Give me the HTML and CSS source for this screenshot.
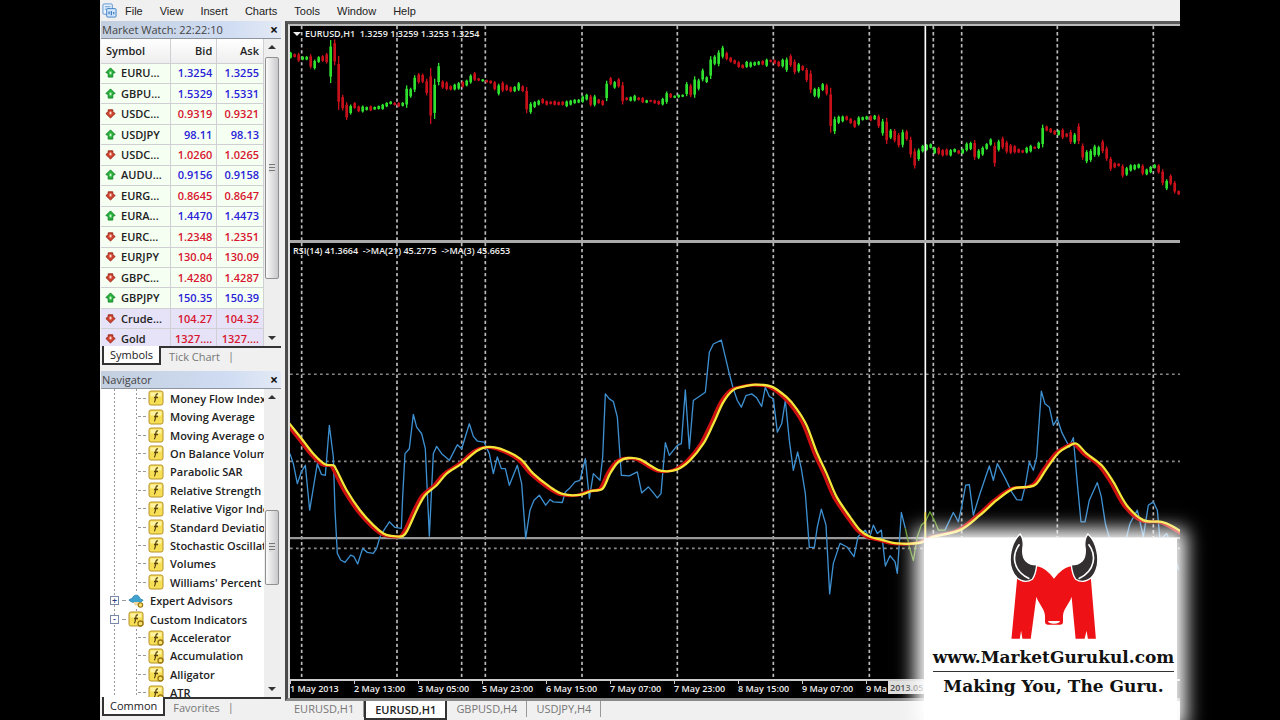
FILE: index.html
```html
<!DOCTYPE html>
<html lang="en">
<head>
    <meta charset="UTF-8">
    <meta name="viewport" content="width=device-width, initial-scale=1.0">
    <title>EURUSD,H1</title>
    <link rel="stylesheet" href="styles.css">
</head>
<body>

<!-- shared icons -->
<svg class="defs" width="0" height="0">
    <symbol id="up" viewBox="0 0 12 12">
        <path d="M6 1l5 5-2.500 1v4h-5V7L1 6z" fill="#27b03a" stroke="#15852a"/>
        <path d="M5 5h2v3H5z" fill="#d8ffd8"/>
    </symbol>
    <symbol id="down" viewBox="0 0 12 12">
        <path d="M6 11L1 6l2.500-2V2h5v2L11 6z" fill="#d0432f" stroke="#962315"/>
        <path d="M5 4h2v3H5z" fill="#ffe0d8"/>
    </symbol>
    <symbol id="func" viewBox="0 0 16 16">
        <rect x="1" y="1" width="14" height="14" rx="2" fill="#f7df55" stroke="#b8932a"/>
        <path d="M2.500 2.500h11v4h-11z" fill="#fdf3a0"/>
        <path d="M10 4c-2-.5-2 1-2.400 4S7 12 6 12M6 7.500h4" fill="none" stroke="#5a4510" stroke-width="1.300"/>
    </symbol>
    <symbol id="custom" viewBox="0 0 16 16">
        <use href="#func" width="16" height="16"/>
        <circle cx="12.500" cy="12.500" r="2.500" fill="#f7e36a" stroke="#9a7512" stroke-width="1.300"/>
    </symbol>
    <symbol id="expert" viewBox="0 0 18 16">
        <path d="M1 7c1-1 3-1.500 4-2 1-4 6-5 8-1l1 2 3 1c-2 3-5 3-8 3S3 9 1 7z" fill="#3fa3cf" stroke="#2a7ea8"/>
        <path d="M6 9h7l-1 4H8z" fill="#f3d79a"/>
        <circle cx="14" cy="12.500" r="2.500" fill="#f7e36a" stroke="#9a7512" stroke-width="1.300"/>
    </symbol>
</svg>

<div class="app">
    <nav class="menubar">
        <svg class="app-icon" viewBox="0 0 16 16">
            <rect x="1" y="1" width="10" height="11" rx="1" fill="#e9f3fd" stroke="#5b93cf"/>
            <path d="M3 4h6M3 6.500h6" stroke="#5b93cf"/>
            <rect x="5" y="6" width="10" height="9" rx="1" fill="#d4e7fa" stroke="#3f7fc4"/>
            <path d="M7.500 12V9M10 13V8.500M12.500 12V9.500" stroke="#3f7fc4" stroke-width="1.400"/>
        </svg>
        <button>File</button>
        <button>View</button>
        <button>Insert</button>
        <button>Charts</button>
        <button>Tools</button>
        <button>Window</button>
        <button>Help</button>
    </nav>

    <div class="workspace">
        <aside class="sidebar">
            <section class="panel market">
                <header class="panel-title">
                    <span>Market Watch: 22:22:10</span>
                    <button class="close" aria-label="Close Market Watch">×</button>
                </header>
                <div class="panel-body">
                    <div class="scroll-view">
                        <table>
                            <thead>
                                <tr><th>Symbol</th><th>Bid</th><th>Ask</th></tr>
                            </thead>
                            <tbody>
                                <tr class="up"><td><svg><use href="#up"/></svg>EURU...</td><td>1.3254</td><td>1.3255</td></tr>
                                <tr class="up"><td><svg><use href="#up"/></svg>GBPU...</td><td>1.5329</td><td>1.5331</td></tr>
                                <tr class="down"><td><svg><use href="#down"/></svg>USDC...</td><td>0.9319</td><td>0.9321</td></tr>
                                <tr class="up"><td><svg><use href="#up"/></svg>USDJPY</td><td>98.11</td><td>98.13</td></tr>
                                <tr class="down"><td><svg><use href="#down"/></svg>USDC...</td><td>1.0260</td><td>1.0265</td></tr>
                                <tr class="up"><td><svg><use href="#up"/></svg>AUDU...</td><td>0.9156</td><td>0.9158</td></tr>
                                <tr class="down"><td><svg><use href="#down"/></svg>EURG...</td><td>0.8645</td><td>0.8647</td></tr>
                                <tr class="up"><td><svg><use href="#up"/></svg>EURA...</td><td>1.4470</td><td>1.4473</td></tr>
                                <tr class="down"><td><svg><use href="#down"/></svg>EURC...</td><td>1.2348</td><td>1.2351</td></tr>
                                <tr class="down"><td><svg><use href="#down"/></svg>EURJPY</td><td>130.04</td><td>130.09</td></tr>
                                <tr class="down"><td><svg><use href="#down"/></svg>GBPC...</td><td>1.4280</td><td>1.4287</td></tr>
                                <tr class="up"><td><svg><use href="#up"/></svg>GBPJPY</td><td>150.35</td><td>150.39</td></tr>
                                <tr class="down cfd"><td><svg><use href="#down"/></svg>Crude...</td><td>104.27</td><td>104.32</td></tr>
                                <tr class="down cfd"><td><svg><use href="#down"/></svg>Gold</td><td>1327....</td><td>1327....</td></tr>
                            </tbody>
                        </table>
                    </div>
                    <div class="scrollbar">
                        <span class="arrow arrow-up"></span>
                        <div class="track"><div class="thumb"></div></div>
                        <span class="arrow arrow-down"></span>
                    </div>
                </div>
                <div class="tabs">
                    <button class="active">Symbols</button>
                    <button>Tick Chart</button>
                </div>
            </section>

            <section class="panel navigator">
                <header class="panel-title">
                    <span>Navigator</span>
                    <button class="close" aria-label="Close Navigator">×</button>
                </header>
                <div class="panel-body">
                    <div class="scroll-view">
                        <ul class="tree">
                            <li><i></i><svg><use href="#func"/></svg>Money Flow Index</li>
                            <li><i></i><svg><use href="#func"/></svg>Moving Average</li>
                            <li><i></i><svg><use href="#func"/></svg>Moving Average o</li>
                            <li><i></i><svg><use href="#func"/></svg>On Balance Volum</li>
                            <li><i></i><svg><use href="#func"/></svg>Parabolic SAR</li>
                            <li><i></i><svg><use href="#func"/></svg>Relative Strength I</li>
                            <li><i></i><svg><use href="#func"/></svg>Relative Vigor Inde</li>
                            <li><i></i><svg><use href="#func"/></svg>Standard Deviatio</li>
                            <li><i></i><svg><use href="#func"/></svg>Stochastic Oscillat</li>
                            <li><i></i><svg><use href="#func"/></svg>Volumes</li>
                            <li><i></i><svg><use href="#func"/></svg>Williams' Percent I</li>
                            <li class="folder"><button aria-label="Expand">+</button><i></i><svg><use href="#expert"/></svg>Expert Advisors</li>
                            <li class="folder"><button aria-label="Collapse">-</button><i></i><svg><use href="#custom"/></svg>Custom Indicators</li>
                            <li><i></i><svg><use href="#custom"/></svg>Accelerator</li>
                            <li><i></i><svg><use href="#custom"/></svg>Accumulation</li>
                            <li><i></i><svg><use href="#custom"/></svg>Alligator</li>
                            <li><i></i><svg><use href="#custom"/></svg>ATR</li>
                        </ul>
                    </div>
                    <div class="scrollbar low">
                        <span class="arrow arrow-up"></span>
                        <div class="track"><div class="thumb"></div></div>
                        <span class="arrow arrow-down"></span>
                    </div>
                </div>
                <div class="tabs">
                    <button class="active">Common</button>
                    <button>Favorites</button>
                </div>
            </section>
        </aside>

        <main class="charts">
            <div class="frame">
                <div class="chart">
                    <div class="pane price">
                        <svg viewBox="0 0 2670 639" preserveAspectRatio="none">
                            <path class="grid" d="M35 0v639M321 0v639M515 0v639M586 0v639M876 0v639M1162 0v639M1450 0v639M1738 0v639M1930 0v639M2015 0v639M2302 0v639M2590 0v639"/>
                            <g id="candles"></g>
                            <path class="cross" d="M1906 0v639"/>
                        </svg>
                        <p class="caption"><i></i>EURUSD,H1&nbsp; 1.3259 1.3259 1.3253 1.3254</p>
                    </div>
                    <div class="pane rsi">
                        <svg viewBox="0 0 2670 1311" preserveAspectRatio="none">
                            <path class="grid" d="M35 0v1311M321 0v1311M515 0v1311M586 0v1311M876 0v1311M1162 0v1311M1450 0v1311M1738 0v1311M1930 0v1311M2015 0v1311M2302 0v1311M2590 0v1311"/>
                            <path class="grid level" d="M0 395h2670M0 657h2670M0 919h2670"/>
                            <path class="cross level-line" d="M0 888h2670"/>
                            <g transform="translate(-30 204)">
                                <polyline class="rsi-line" points="30,430 40,460 52,520 64,485 76,465 89,600 112,460 124,492 136,495 148,345 160,440 165,600 172,730 182,750 195,757 212,735 222,740 233,762 248,715 262,727 280,730 290,715 300,680 312,660 328,635 345,652 364,655 368,560 375,430 388,415 400,312 410,350 425,370 436,415 448,678 460,430 470,408 485,430 508,450 532,403 545,415 568,340 580,378 592,392 612,395 628,430 640,490 652,440 664,475 676,475 688,525 712,465 725,520 737,685 750,600 762,570 778,555 797,585 810,568 820,575 847,577 856,545 868,535 885,515 900,510"/>
                            </g>
                            <g transform="translate(870 204)">
                                <polyline class="rsi-line" points="0,510 16,445 28,565 40,490 60,510 68,440 76,250 88,265 100,273 112,320 124,495 148,497 172,485 185,548 205,530 218,545 232,563 243,550 256,397 268,435 292,405 304,400 316,238 328,415 340,270 376,245 388,125 400,100 424,88 448,190 460,235 472,270 484,290 498,255 515,250 530,262 545,288 556,230 568,258 580,265 592,365 605,340 616,270 628,390 640,480 653,425 664,475 676,550 688,712 703,712 712,650 724,597 738,645 749,852 760,760 780,700 800,710 822,740 834,680 856,660 868,685 880,645 892,670 904,660 916,768 930,737 945,755 952,790 964,607 976,655"/>
                            </g>
                            <g transform="translate(1770 324)">
                                <polyline class="rsi-line near" points="76,535 88,590 100,632 112,560 124,525 136,515 150,485 165,515 175,540 195,540"/>
                                <polyline class="rsi-line" points="195,540 220,487 235,515 245,470 257,405 268,403 280,495 300,430 328,347 340,390 352,340 376,385 395,425 410,448 425,450 436,405 448,335 460,360 470,320 484,122 495,160 508,170 520,225 532,205 545,245 568,290 580,262 592,400 603,515 615,515 628,450 652,397 664,440 676,520 690,570 735,580 750,520 772,480 790,560 805,465 820,455 832,480 840,570 860,550 880,600 896,660"/>
                            </g>
                            <!-- both averages share one curve, the fast one runs a little ahead -->
                            <path id="ma-fast"/>
                            <path id="ma-slow"/>
                            <path class="cross" d="M1906 0v1311"/>
                            <path class="spot" d="M1906 810v80"/>
                        </svg>
                        <p class="caption">RSI(14) 41.3664&nbsp; -&gt;MA(21) 45.2775&nbsp; -&gt;MA(3) 45.6653</p>
                    </div>
                    <div class="time-axis">
                        <span>1 May 2013</span><span>2 May 13:00</span><span>3 May 05:00</span><span>5 May 23:00</span><span>6 May 15:00</span><span>7 May 07:00</span><span>7 May 23:00</span><span>8 May 15:00</span><span>9 May 07:00</span><span class="cut">9 Ma</span><b>2013.05</b>
                    </div>
                </div>
            </div>
            <div class="chart-tabs">
                <button>EURUSD,H1</button>
                <button class="active">EURUSD,H1</button>
                <button>GBPUSD,H4</button>
                <button>USDJPY,H4</button>
            </div>
        </main>
    </div>

    <div class="brand">
        <svg viewBox="325 70 270 325">
            <path fill="#ee1216" d="M349 208L332 388h25l4-24 4 24h25L407 262c6 20 25 36 26 58v18q1 8 9 8h36q9 0 9-8v-18c1-22 20-38 26-58l12 126h27l6-24 4 24h24L571 208C550 218 525 205 510 170Q482 176 460 208Q438 176 410 170C395 205 370 218 349 208z"/>
            <path fill="#fff" d="M442 335h36q-2 8-18 8t-18-8z"/>
            <g id="horn">
                <path fill="#332f31" stroke="#fff" stroke-width="4" d="M358 73C330 98 322 150 333 180C344 212 372 224 395 209Q405 195 408 166C378 166 364 150 366 118Q371 90 358 73z"/>
                <path fill="none" stroke="#fff" stroke-width="5" d="M356 104C332 136 334 182 386 208"/>
            </g>
            <use href="#horn" transform="translate(920 0) scale(-1 1)"/>
        </svg>
        <a href="#">www.MarketGurukul.com</a>
        <p>Making You, The Guru.</p>
    </div>
</div>

<script src="chart.js"></script>
</body>
</html>
```
FILE: styles.css
```css
* {
    box-sizing: border-box;
}

html, body {
    height: 100%;
    margin: 0;
    overflow: hidden;
    background-color: #000;
    font-family: "Open Sans", "Noto Sans", sans-serif;
    font-size: 11px;
    color: #222;
}

button {
    font: inherit;
    color: inherit;
    border: 0;
    padding: 0;
    background: none;
}

p {
    margin: 0;
}

.defs {
    position: absolute;
}

.app {
    position: relative;
    display: flex;
    flex-direction: column;
    height: 100%;
    margin: 0 100px;
    background-color: #f0f0f0;
}

/* menu */

.menubar {
    display: flex;
    align-items: center;
    flex: none;
    height: 21px;
    padding-left: 2px;
    gap: 17px;
    font-family: "Liberation Sans", sans-serif;
}

.app-icon {
    width: 15px;
    height: 15px;
    margin-right: -9px;
}

.workspace {
    display: flex;
    flex: 1;
    min-height: 0;
}

/* left side */

.sidebar {
    display: flex;
    flex-direction: column;
    flex: none;
    width: 185px;
    padding: 0 4px 4px 1px;
    gap: 6px;
}

.panel {
    display: flex;
    flex-direction: column;
    min-height: 0;
}

.market {
    flex: 344;
}

.navigator {
    flex: 345;
}

.panel-title {
    display: flex;
    justify-content: space-between;
    align-items: center;
    flex: none;
    height: 18px;
    padding: 0 2px 0 1px;
    border-bottom: 1px solid #8d949e;
    background: linear-gradient(90deg, #c3cfdf, #cfdcf2 70%, #e4eaf5);
    color: #444;
}

.close {
    width: 10px;
    font-size: 14px;
    font-weight: bold;
    line-height: 14px;
    color: #111;
}

.panel-body {
    display: flex;
    flex: 1;
    min-height: 0;
    padding-right: 1px;
}

.scroll-view {
    flex: 1;
    overflow: hidden;
    background-color: #fff;
}

table {
    width: 100%;
    height: 311px;
    border-collapse: collapse;
    table-layout: fixed;
    line-height: 14px;
}

th, td {
    padding: 0 4px 0 0;
    border: 1px solid #cfcfd4;
    border-width: 0 1px 1px 0;
    text-align: right;
    font-weight: 600;
    white-space: nowrap;
}

th {
    height: 24px;
    background: linear-gradient(#fff, #eee);
}

th:first-child {
    width: 69px;
    padding-left: 5px;
    text-align: left;
}

td:first-child {
    padding-left: 4px;
    text-align: left;
    color: #222;
}

td svg {
    width: 11px;
    height: 11px;
    margin-right: 5px;
    vertical-align: -1px;
}

tbody tr {
    background-color: #f5fff2;
}

tbody tr.cfd {
    background-color: #e6e2f8;
}

.up {
    color: #2a22d8;
}

.down {
    color: #d8152e;
}

.scrollbar {
    display: flex;
    flex-direction: column;
    align-items: center;
    width: 16px;
    padding: 6px 0;
    background-color: #eee;
}

.arrow {
    border: 4px solid transparent;
    border-top-width: 0;
    border-bottom: 4px solid #333;
}

.arrow-down {
    border-top: 4px solid #333;
    border-bottom-width: 0;
}

.track {
    display: flex;
    flex-direction: column;
    flex: 1;
    width: 14px;
    padding: 8px 0 57px;
}

.low .track {
    padding: 111px 0 102px;
}

.thumb {
    flex: 1;
    border: 1px solid #8f8f8f;
    border-radius: 2px;
    background:
        repeating-linear-gradient(#777 0 1px, #ddd 1px 3px) center / 6px 9px no-repeat,
        linear-gradient(90deg, #fafafa, #c9c9cd);
}

.tabs {
    display: flex;
    flex: none;
    height: 19px;
    color: #777;
}

.tabs button {
    padding: 0 8px;
    border-top: 2px solid #333;
}

.tabs::after {
    content: "|";
    flex: 1;
    border-top: 2px solid #333;
}

.tabs .active {
    margin-left: 1px;
    padding: 0 6px;
    border: 2px solid #333;
    border-top: 0;
    background-color: #fff;
    color: #222;
}

/* tree, with the two dotted guide lines as backgrounds */

.tree {
    display: grid;
    grid-auto-rows: 1fr;
    height: 313px;
    margin: 0;
    padding: 0;
    list-style: none;
    font-weight: 600;
    background:
        repeating-linear-gradient(#999 0 2px, #fff 2px 4px) 13px 0 / 1px 100% no-repeat,
        repeating-linear-gradient(#999 0 2px, #fff 2px 4px) 35px 0 / 1px 100% no-repeat;
}

.tree li {
    display: flex;
    align-items: center;
    padding-left: 37px;
    white-space: nowrap;
}

.tree i {
    width: 8px;
    margin-right: 2px;
    border-top: 1px dashed #999;
}

.tree svg {
    flex: none;
    width: 16px;
    height: 16px;
    margin-right: 6px;
}

.tree .folder {
    padding-left: 9px;
}

.folder i {
    width: 4px;
    margin: 0 2px 0 3px;
}

.folder svg {
    background-color: #fff;
}

.folder button {
    width: 9px;
    height: 9px;
    border: 1px solid #7a88a8;
    background-color: #fff;
    font-size: 9px;
    line-height: 6px;
    color: #2a3c80;
}

/* chart window */

.charts {
    display: flex;
    flex-direction: column;
    flex: 1;
    min-width: 0;
}

.frame {
    flex: 1;
    display: flex;
    min-height: 0;
    border: 3px solid #4c4c4c;
    border-top-color: #5a5a5a;
    border-right: 0;
    border-bottom-color: #8a8a8a;
}

.chart {
    display: flex;
    flex-direction: column;
    flex: 1;
    min-width: 0;
    border-top: 2px solid #bbb;
    border-left: 2px solid #ddd;
    background-color: #000;
    color: #eee;
    font-size: 9px;
    font-weight: 600;
}

.pane {
    position: relative;
    min-height: 0;
}

.pane svg {
    display: block;
    width: 100%;
    height: 100%;
}

.price {
    flex: 216;
    border-bottom: 3px solid #aaa;
}

.rsi {
    flex: 439;
    border-bottom: 2px solid #ccc;
}

.caption {
    position: absolute;
    top: 2px;
    left: 3px;
    line-height: 12px;
    white-space: nowrap;
}

.caption i {
    display: inline-block;
    margin-right: 4px;
    border: 4px solid transparent;
    border-top-color: #eee;
    border-bottom: 0;
    vertical-align: 1px;
}

.grid {
    stroke: #bbb;
    stroke-width: 5;
    stroke-dasharray: 10 8;
}

.level {
    stroke: #888;
    stroke-dasharray: 8 10;
}

.cross {
    stroke: #fff;
    stroke-width: 5;
}

.level-line {
    stroke: #999;
    stroke-width: 7;
}

.spot {
    stroke: #f0e040;
    stroke-width: 5;
}

.bull {
    fill: #2fe02f;
}

.bear {
    fill: #c8101a;
}

.rsi-line {
    fill: none;
    stroke: #3d8fd0;
    stroke-width: 4;
    stroke-linejoin: round;
}

.near {
    stroke: #5f9a20;
}

#ma-slow {
    fill: none;
    stroke: #f5e53a;
    stroke-width: 7;
}

#ma-fast {
    fill: none;
    stroke: #d01010;
    stroke-width: 9;
}

.time-axis {
    display: flex;
    flex: none;
    height: 17px;
    line-height: 15px;
    white-space: nowrap;
    overflow: hidden;
}

.time-axis span {
    flex: 0 0 64px;
    background: linear-gradient(#ccc, #ccc) 0 0 / 1px 3px no-repeat;
}

.time-axis .cut {
    flex-basis: 22px;
}

.time-axis b {
    flex-basis: 80px;
    height: 13px;
    padding: 0 2px;
    background-color: #ddd;
    color: #444;
    font-weight: 600;
    line-height: 14px;
}

.chart-tabs {
    display: flex;
    flex: none;
    height: 19px;
    color: #777;
}

.chart-tabs button {
    height: 16px;
    padding: 0 9px;
    border-right: 1px solid #999;
    line-height: 14px;
}

.chart-tabs .active {
    height: 19px;
    border: 2px solid #333;
    border-top: 0;
    background-color: #fff;
    color: #222;
    font-weight: 600;
}

/* logo card floating over the corner of the chart */

.brand {
    position: absolute;
    right: 3px;
    bottom: 0;
    display: flex;
    flex-direction: column;
    align-items: center;
    width: 253px;
    height: 182px;
    padding-left: 6px;
    background-color: #fff;
    box-shadow: 0 0 18px 9px #fff;
    font-family: "DejaVu Serif", serif;
    font-size: 17px;
    font-weight: bold;
    line-height: 28px;
    color: #111;
    white-space: nowrap;
}

.brand svg {
    flex: none;
    width: 90px;
    height: 108px;
    margin: -5px 0 2px;
}

.brand a {
    border-bottom: 1px solid #333;
    color: inherit;
    text-decoration: none;
}
```
FILE: chart.js
```js
// one candle per hour: g = up, r = down, then high and low
const candles = `
g155-175 r160-172 r158-185 g168-180 g168-180 r162-205 g178-208 g168-188 r165-185 r158-190
g120-248 r118-195 r167-328 r283-330 r305-358 g312-342 r305-325 r315-335 g315-336 g318-330
r315-332 g318-328 g315-327 g310-328 g305-320 g302-312 r305-315 r305-320 g305-318 g255-322
g262-292 g225-275 r218-250 r220-248 r235-285 r203-370 g235-355 g188-255 r240-265 r243-270
r255-270 g250-270 g245-268 r242-262 g238-258 g222-250 r215-242 r233-242 g236-244 r238-247
r240-250 r242-270 g250-285 r243-275 r252-272 r258-276 g257-275 g245-272 r255-275 r260-338
g305-340 g302-322 g298-315 r293-310 r300-315 r302-312 r300-315 r303-315 r302-315 g300-320
g298-315 g296-310 g296-308 g285-307 g280-300 r283-318 g283-318 r295-310 r298-316 g241-302
r230-255 g242-265 r233-262 r245-312 r290-300 g288-303 g283-303 r290-300 r290-308 g298-308
r298-305 r298-310 r300-313 g292-315 g273-310 r278-293 g285-293 g282-292 g282-290 g245-287
r250-290 g228-292 g235-270 g205-243 g228-248 g168-236 g165-195 g150-198 g137-175 r155-180
r170-187 r178-192 r183-203 r192-205 g182-203 g184-202 g184-197 g182-195 r180-195 g175-200
r178-186 r178-192 r182-200 g175-202 g172-215 r162-200 r178-222 g188-217 r195-212 r203-245
r210-278 g262-290 g260-294 g248-272 r250-285 r262-396 g348-400 g345-370 g345-365 r345-360
r352-370 r358-382 g347-375 g348-360 g346-358 r344-362 g343-358 r342-382 g355-405 r352-430
g385-415 r385-425 r397-440 g387-440 r388-420 r408-470 r443-503 g443-480 g432-455 g430-450
g428-443 g438-460 r438-462 r445-467 r443-465 g445-467 g443-455 r447-460 g443-460 g425-452
g423-448 r418-477 g445-475 g437-465 g427-447 g413-435 r425-497 g417-452 r408-445 r420-458
r430-460 r433-458 r443-457 r447-457 g438-458 g432-455 r437-445 g423-445 g372-440 r375-392
r382-397 r388-403 g388-405 r383-415 r397-410 r388-430 g397-430 r368-430 r428-477 g448-487
g445-483 g432-468 g435-467 r417-457 r437-480 r468-510 r485-502 r487-497 r490-530 g498-525
g490-512 g490-508 g488-503 r490-523 g503-523 g495-517 g490-503 r490-518 r505-553 g535-567
r520-553 r540-577 r568-582`.trim().split(/\s+/);

const average = [
    [-14, 528], [35, 589], [70, 634], [105, 666], [130, 669], [140, 684], [170, 744], [210, 804],
    [250, 849], [280, 874], [300, 881], [338, 882], [355, 859], [380, 804], [405, 759], [440, 729],
    [470, 694], [515, 664], [560, 626], [590, 614], [630, 619], [690, 649], [730, 694], [780, 734],
    [820, 756], [870, 758], [905, 746], [938, 739], [960, 694], [985, 659], [1015, 647], [1050, 651],
    [1085, 672], [1115, 686], [1160, 682], [1200, 654], [1240, 604], [1270, 544], [1300, 479],
    [1330, 442], [1360, 432], [1395, 426], [1445, 432], [1490, 464], [1520, 499], [1550, 549],
    [1580, 629], [1610, 694], [1640, 764], [1680, 824], [1710, 864], [1740, 884], [1775, 893],
    [1820, 904], [1890, 902], [1930, 884], [2010, 864], [2070, 819], [2120, 774], [2170, 739],
    [2215, 734], [2240, 724], [2270, 679], [2305, 632], [2335, 612], [2360, 604], [2390, 634],
    [2435, 669], [2470, 719], [2510, 789], [2560, 834], [2615, 839], [2650, 854], [2690, 880]
];

const step = 12;
const top0 = 78;

function bar(x, y, width, height, cls) {
    return `<rect class="${cls}" x="${x}" y="${y}" width="${width}" height="${height}"/>`;
}

// smooth path through all points
function curve(points) {
    let d = `M${points[0]}`;
    for (let i = 0; i < points.length - 1; i++) {
        const a = points[i - 1] || points[i];
        const b = points[i];
        const c = points[i + 1];
        const e = points[i + 2] || c;
        d += `C${b[0] + (c[0] - a[0]) / 6} ${b[1] + (c[1] - a[1]) / 6} `
            + `${c[0] - (e[0] - b[0]) / 6} ${c[1] - (e[1] - b[1]) / 6} ${c}`;
    }
    return d;
}

document.getElementById("candles").innerHTML = candles.map((c, i) => {
    const [high, low] = c.slice(1).split("-").map(Number);
    const cls = c[0] === "g" ? "bull" : "bear";
    const x = 2 + i * step;
    const size = low - high;
    return bar(x - 2, high - top0, 4, size, cls)
        + bar(x - 4, high - top0 + size * 0.15, 8, size * 0.7, cls);
}).join("");

document.getElementById("ma-slow").setAttribute("d", curve(average));
document.getElementById("ma-fast").setAttribute("d", curve(average.map(([x, y]) => [x - 9, y + 1])));
```
